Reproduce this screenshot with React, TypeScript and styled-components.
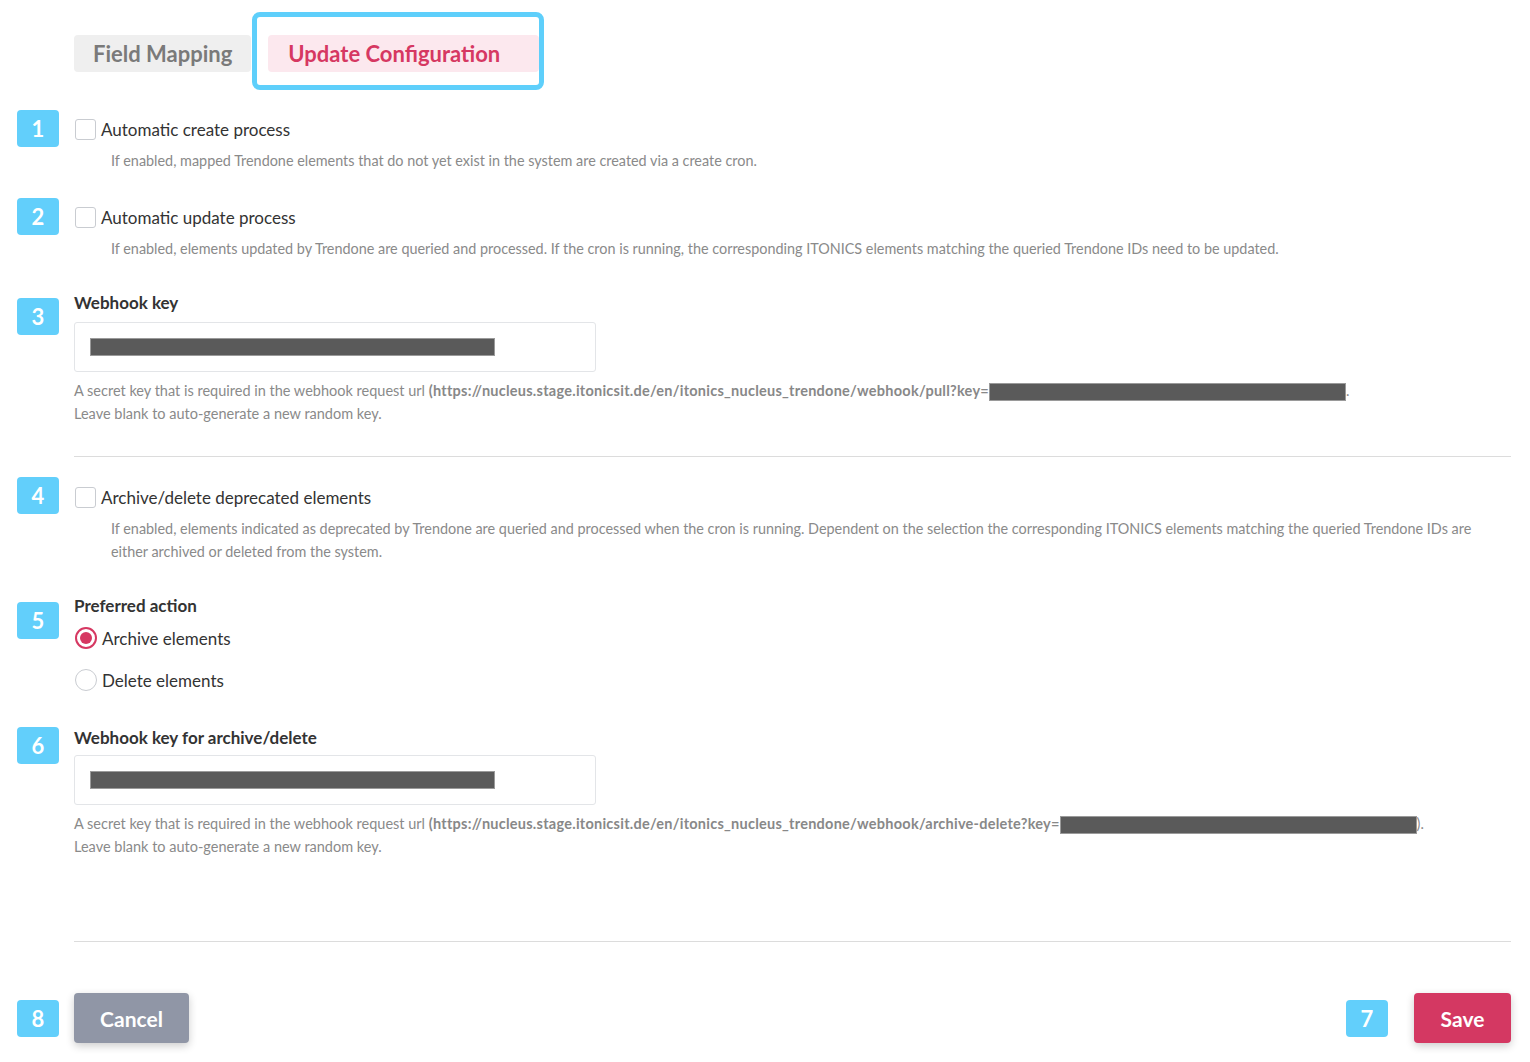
import React, { FC } from "react";
import styled, { createGlobalStyle, css } from "styled-components";

const GlobalStyle = createGlobalStyle`
  html, body {
    margin: 0;
    padding: 0;
    background: #ffffff;
  }
  body {
    font-family: "Lato", "Liberation Sans", sans-serif;
    color: #333333;
  }
`;

const Page = styled.div`
  width: 1530px;
  height: 1062px;
  box-sizing: border-box;
  padding: 12px 19px 0 17px;
  overflow: hidden;
`;

const TabBar = styled.div`
  display: flex;
  align-items: flex-start;
  padding-left: 57px;
  gap: 1px;
`;

const Tab = styled.div<{ active?: boolean }>`
  height: 37px;
  padding: 0 19px;
  display: flex;
  align-items: center;
  border-radius: 4px;
  font-size: 22px;
  font-weight: 700;
  background: #efefef;
  color: #7a7a7a;

  ${(props) =>
    props.active &&
    css`
      padding: 0 20px;
      background: #fce8ee;
      color: #d63862;
    `}
`;

const FieldTab = styled(Tab)`
  margin-top: 23px;
`;

const Highlight = styled.div`
  box-sizing: border-box;
  width: 292px;
  height: 78px;
  border: 5px solid #5ecffb;
  border-radius: 8px;
  padding: 18px 0 0 11px;
`;

const Section = styled.div<{ top: number }>`
  display: grid;
  grid-template-columns: 57px 1fr;
  align-items: start;
  margin-top: ${(props) => props.top}px;
`;

const Badge = styled.div<{ offset?: number }>`
  width: 42px;
  height: 37px;
  border-radius: 4px;
  background: #62cffb;
  color: #ffffff;
  font-size: 22px;
  font-weight: 700;
  display: flex;
  align-items: center;
  justify-content: center;
  margin-top: ${(props) => props.offset || 0}px;
`;

const Body = styled.div`
  display: flex;
  flex-direction: column;
`;

const CheckRow = styled.label`
  height: 40px;
  display: flex;
  align-items: center;
  gap: 5px;
  font-size: 17px;
  color: #333333;
`;

const Checkbox = styled.span`
  width: 21px;
  height: 21px;
  margin-left: 1px;
  box-sizing: border-box;
  border: 1px solid #c9ccd1;
  border-radius: 3px;
  background: #ffffff;
`;

const Description = styled.div`
  padding-left: 37px;
  font-size: 14.4px;
  line-height: 23px;
  color: #8a8a8a;
`;

const Title = styled.div`
  font-size: 17px;
  font-weight: 700;
  line-height: 22px;
  color: #333333;
`;

const Input = styled.div<{ gap?: number }>`
  box-sizing: border-box;
  width: 522px;
  height: 50px;
  margin-top: ${(props) => props.gap ?? 8}px;
  border: 1px solid #e3e5e8;
  border-radius: 3px;
  display: flex;
  align-items: center;
  padding-left: 15px;
`;

const Redacted = styled.span<{ w: number; h?: number }>`
  display: inline-block;
  width: ${(props) => props.w}px;
  height: ${(props) => props.h || 18}px;
  background: #5a5a5a;
  box-sizing: border-box;
  border: 1px solid #9a9a9a;
  vertical-align: middle;
`;

const Help = styled.div`
  margin-top: 7px;
  font-size: 14.5px;
  line-height: 23px;
  color: #8a8a8a;

  b {
    font-weight: 700;
    color: #888888;
    letter-spacing: 0.25px;
  }
`;

const Divider = styled.hr<{ top: number }>`
  margin: ${(props) => props.top}px 0 0 57px;
  border: none;
  border-top: 1px solid #dcdcdc;
  height: 0;
`;

const RadioRow = styled.label`
  height: 42px;
  display: flex;
  align-items: center;
  gap: 5px;
  font-size: 17px;
  color: #333333;
`;

const Radio = styled.span<{ checked?: boolean }>`
  width: 22px;
  height: 22px;
  margin-left: 1px;
  box-sizing: border-box;
  border-radius: 50%;
  border: 1px solid #c9ccd1;
  display: flex;
  align-items: center;
  justify-content: center;

  ${(props) =>
    props.checked &&
    css`
      border: 2px solid #d63862;
      &::after {
        content: "";
        width: 12px;
        height: 12px;
        border-radius: 50%;
        background: #d63862;
      }
    `}
`;

const Footer = styled.div`
  margin-top: 51px;
  display: flex;
  justify-content: space-between;
  align-items: center;
`;

const FooterGroup = styled.div<{ gap: number }>`
  display: flex;
  align-items: center;
  gap: ${(props) => props.gap}px;
`;

const Button = styled.button<{ variant: "cancel" | "save" }>`
  height: 50px;
  border: none;
  border-radius: 4px;
  font-family: "Lato", "Liberation Sans", sans-serif;
  font-size: 21px;
  font-weight: 700;
  color: #ffffff;
  box-shadow: 0 3px 8px rgba(0, 0, 0, 0.2);
  padding: 0;
  background: ${(props) => (props.variant === "save" ? "#d43862" : "#9096a6")};
`;

const SaveButton = styled(Button)`
  width: 97px;
`;

const CancelButton = styled(Button)`
  width: 115px;
`;

const App: FC = () => {
  return (
    <Page>
      <GlobalStyle />
      <TabBar>
        <FieldTab>Field Mapping</FieldTab>
        <Highlight>
          <Tab active>Update Configuration</Tab>
        </Highlight>
      </TabBar>

      <Section top={19}>
        <Badge offset={1}>1</Badge>
        <Body>
          <CheckRow>
            <Checkbox />
            Automatic create process
          </CheckRow>
          <Description>
            If enabled, mapped Trendone elements that do not yet exist in the system are created via a
            create cron.
          </Description>
        </Body>
      </Section>

      <Section top={25}>
        <Badge offset={1}>2</Badge>
        <Body>
          <CheckRow>
            <Checkbox />
            Automatic update process
          </CheckRow>
          <Description>
            If enabled, elements updated by Trendone are queried and processed. If the cron is running,
            the corresponding ITONICS elements matching the queried Trendone IDs need to be updated.
          </Description>
        </Body>
      </Section>

      <Section top={32}>
        <Badge offset={6}>3</Badge>
        <Body>
          <Title>Webhook key</Title>
          <Input>
            <Redacted w={405} />
          </Input>
          <Help>
            A secret key that is required in the webhook request url{" "}
            <b>
              (https://nucleus.stage.itonicsit.de/en/itonics_nucleus_trendone/webhook/pull?key=
            </b>
            <Redacted w={357} />.
            <br />
            Leave blank to auto-generate a new random key.
          </Help>
        </Body>
      </Section>

      <Divider top={31} />

      <Section top={20}>
        <Badge>4</Badge>
        <Body>
          <CheckRow>
            <Checkbox />
            Archive/delete deprecated elements
          </CheckRow>
          <Description>
            If enabled, elements indicated as deprecated by Trendone are queried and processed when the
            cron is running. Dependent on the selection the corresponding ITONICS elements matching the
            queried Trendone IDs are
            <br />
            either archived or deleted from the system.
          </Description>
        </Body>
      </Section>

      <Section top={32}>
        <Badge offset={7}>5</Badge>
        <Body>
          <Title>Preferred action</Title>
          <RadioRow>
            <Radio checked />
            Archive elements
          </RadioRow>
          <RadioRow>
            <Radio />
            Delete elements
          </RadioRow>
        </Body>
      </Section>

      <Section top={26}>
        <Badge offset={0}>6</Badge>
        <Body>
          <Title>Webhook key for archive/delete</Title>
          <Input gap={6}>
            <Redacted w={405} />
          </Input>
          <Help>
            A secret key that is required in the webhook request url{" "}
            <b>
              (https://nucleus.stage.itonicsit.de/en/itonics_nucleus_trendone/webhook/archive-delete?key=
            </b>
            <Redacted w={357} />
            ).
            <br />
            Leave blank to auto-generate a new random key.
          </Help>
        </Body>
      </Section>

      <Divider top={83} />

      <Footer>
        <FooterGroup gap={15}>
          <Badge>8</Badge>
          <CancelButton variant="cancel">Cancel</CancelButton>
        </FooterGroup>
        <FooterGroup gap={26}>
          <Badge>7</Badge>
          <SaveButton variant="save">Save</SaveButton>
        </FooterGroup>
      </Footer>
    </Page>
  );
};

export default App;
